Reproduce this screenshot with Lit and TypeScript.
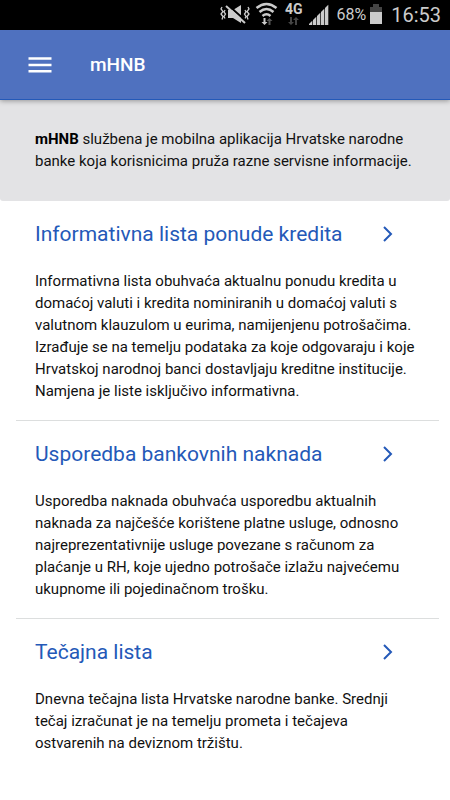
import { LitElement, html, css, svg } from "lit";
import { customElement } from "lit/decorators.js";

interface Entry {
  title: string;
  text: string;
}

const entries: Entry[] = [
  {
    title: "Informativna lista ponude kredita",
    text: "Informativna lista obuhvaća aktualnu ponudu kredita u domaćoj valuti i kredita nominiranih u domaćoj valuti s valutnom klauzulom u eurima, namijenjenu potrošačima. Izrađuje se na temelju podataka za koje odgovaraju i koje Hrvatskoj narodnoj banci dostavljaju kreditne institucije. Namjena je liste isključivo informativna.",
  },
  {
    title: "Usporedba bankovnih naknada",
    text: "Usporedba naknada obuhvaća usporedbu aktualnih naknada za najčešće korištene platne usluge, odnosno najreprezentativnije usluge povezane s računom za plaćanje u RH, koje ujedno potrošače izlažu najvećemu ukupnome ili pojedinačnom trošku.",
  },
  {
    title: "Tečajna lista",
    text: "Dnevna tečajna lista Hrvatske narodne banke. Srednji tečaj izračunat je na temelju prometa i tečajeva ostvarenih na deviznom tržištu.",
  },
];

@customElement("status-bar")
export class StatusBar extends LitElement {
  static styles = css`
    :host {
      display: flex;
      align-items: center;
      justify-content: flex-end;
      height: 30px;
      padding-right: 9px;
      background: #000;
      color: #cbcbcb;
      font-family: Roboto, "Liberation Sans", sans-serif;
    }
    svg {
      display: block;
      flex: none;
    }
    .percent {
      margin: 0 3px 0 6px;
      font-size: 16px;
      line-height: 30px;
    }
    .time {
      margin-left: 8px;
      font-size: 20px;
      line-height: 30px;
    }
  `;

  render() {
    return html`
      <svg width="110" height="30" viewBox="0 0 110 30" fill="#cbcbcb" aria-label="Vibracija, Wi-Fi, 4G, signal" role="img">
        <g fill="none" stroke="#cbcbcb" stroke-width="1.3">
          <path d="M2 7l-1 2 2 2.500-2 2.500 2 2.500-1 3M5 10l-1 2 1.500 2-1.500 2.500 1 2" />
          <path d="M28 7l1 2-2 2.500 2 2.500-2 2.500 1 3M25 10l1 2-1.500 2 1.500 2.500-1 2" />
        </g>
        <path d="M8 10h5l8-5v18l-8-5h-5z" />
        <path d="M8 5L27 22" stroke="#000" stroke-width="2" />
        <path d="M6 6L25 23" stroke="#cbcbcb" stroke-width="2" />
        <g fill="none" stroke="#cbcbcb" stroke-width="2.5">
          <path d="M36.500 8q10-8 20 0M39.500 12q7-6 14 0M42.500 16q4-3.500 8 0" />
        </g>
        <path d="M43.500 18h2v4h2l-3 3-3-3h2z" />
        <path d="M48.500 25h2v-4h2l-3-3-3 3h2z" fill="#555" />
        <text x="65" y="14" font-size="14" font-weight="700">4G</text>
        <path d="M70 17h2v5h2l-3 3-3-3h2zM75 25h2v-5h2l-3-3-3 3h2z" fill="#444" />
        ${[0, 1, 2, 3, 4].map(
          (i) => svg`<path d="M${89 + i * 4} 25v${-(1 + i * 4)}l3.300-3.300v${4.3 + i * 4}z" />`
        )}
      </svg>
      <span class="percent">68%</span>
      <svg width="14" height="30" viewBox="0 0 14 30" aria-label="Baterija" role="img">
        <path d="M4 4h6v3h3v5H1V7h3z" fill="#444" />
        <path d="M1 12h12v12H1z" fill="#cbcbcb" />
      </svg>
      <span class="time">16:53</span>
    `;
  }
}

@customElement("app-root")
export class AppRoot extends LitElement {
  static styles = css`
    :host {
      display: block;
      min-height: 100vh;
      background: #fff;
      color: #111;
      font-family: Roboto, "Liberation Sans", sans-serif;
      font-size: 15px;
      line-height: 22px;
    }
    .bar {
      position: relative;
      display: flex;
      align-items: center;
      gap: 38px;
      box-sizing: border-box;
      height: 70px;
      padding: 0 28px;
      background: #4f71bf;
      border-bottom: 1px solid #2459b8;
      box-shadow: 0 1px 5px rgba(0, 0, 0, 0.35);
      color: #fff;
    }
    .menu {
      display: block;
      padding: 0;
      border: 0;
      background: none;
      color: inherit;
    }
    svg {
      display: block;
    }
    .name {
      margin: 0;
      font-size: 19px;
      font-weight: 500;
    }
    .intro {
      margin: 0;
      padding: 28px 35px 29px;
      background: #e3e3e5;
      border-radius: 0 0 3px 3px;
    }
    .intro b {
      color: #000;
    }
    .entry {
      margin: 0 11px 0 16px;
      padding: 17px 19px 18px;
      border-bottom: 1px solid #dcdede;
    }
    .entry:last-child {
      border-bottom: 0;
    }
    .title {
      margin: 0 0 20px;
      font-size: 21px;
      font-weight: 400;
      line-height: 32px;
    }
    .link {
      display: flex;
      align-items: center;
      justify-content: space-between;
      padding-right: 26px;
      color: #2459b8;
      text-decoration: none;
    }
    .text {
      margin: 0;
    }
  `;

  render() {
    return html`
      <status-bar></status-bar>
      <header class="bar">
        <button class="menu" aria-label="Izbornik">
          <svg width="24" height="18" viewBox="0 0 24 18" fill="currentColor">
            <path d="M0.500 1.200h23v2.500h-23zM0.500 7.700h23v2.500h-23zM0.500 14h23v2.500h-23z" />
          </svg>
        </button>
        <h1 class="name">mHNB</h1>
      </header>
      <main>
        <p class="intro">
          <b>mHNB</b> službena je mobilna aplikacija Hrvatske narodne banke
          koja korisnicima pruža razne servisne informacije.
        </p>
        ${entries.map(
          (entry) => html`
            <section class="entry">
              <h2 class="title">
                <a class="link" href="#">
                  ${entry.title}
                  <svg width="12" height="18" viewBox="0 0 12 18" fill="none" stroke="currentColor" stroke-width="2">
                    <path d="M2 2l7 7-7 7" />
                  </svg>
                </a>
              </h2>
              <p class="text">${entry.text}</p>
            </section>
          `
        )}
      </main>
    `;
  }
}
